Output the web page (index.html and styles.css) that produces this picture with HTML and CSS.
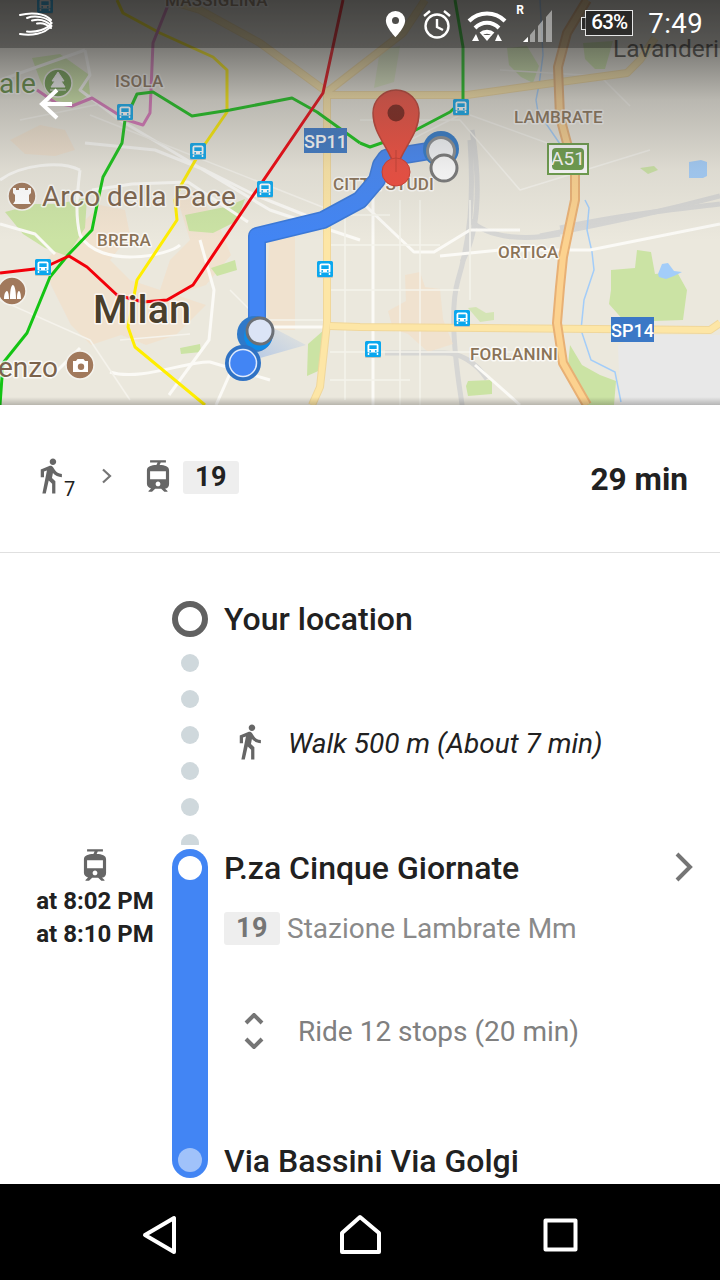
FILE: index.html
```html
<!DOCTYPE html>
<html lang="en">
<head>
<meta charset="utf-8">
<title>Directions</title>
<link rel="stylesheet" href="styles.css">
</head>
<body>
<div class="screen">
  <section class="map">
    <svg class="map-art" viewBox="0 0 720 405" width="720" height="405" xmlns="http://www.w3.org/2000/svg">
      <defs>
        <g id="stop">
          <rect x="-8" y="-7" width="16" height="16" rx="1" fill="#c9c6ba"/>
          <rect x="-8" y="-8" width="16" height="16" rx="1.500" fill="#0aa7ee"/>
          <path d="M-3.500 -5.500h7a2 2 0 0 1 2 2v6a1 1 0 0 1-1 1h-9a1 1 0 0 1-1-1v-6a2 2 0 0 1 2-2z" fill="#fff"/>
          <rect x="-3.700" y="-3.700" width="7.400" height="3.700" fill="#0aa7ee"/>
          <circle cx="-2.800" cy="2" r=".9" fill="#0aa7ee"/>
          <circle cx="2.800" cy="2" r=".9" fill="#0aa7ee"/>
          <path d="M-4.500 4v2M4.500 4v2" stroke="#fff" stroke-width="1.500"/>
        </g>
        <linearGradient id="cone" x1="0" y1="1" x2="1" y2="0">
          <stop offset="0" stop-color="#4285f4" stop-opacity=".35"/>
          <stop offset="1" stop-color="#4285f4" stop-opacity="0"/>
        </linearGradient>
      </defs>
      <rect width="720" height="405" fill="#ebe8dd"/>

      <g class="grey-area">
        <path d="M618 345l26-10h76v70H620z"/>
      </g>
      <g class="rail">
        <path d="M540 236C600 225 660 212 720 196"/>
        <path d="M560 228C620 215 670 210 720 204"/>
        <path d="M470 140C474 200 470 240 458 280S462 400 462 405"/>
        <path d="M472 130C480 180 480 230 462 262"/>
        <path d="M470 220c20 20 60 20 90 14"/>
        <path d="M385 353h60c14 0 30 8 42 26"/>
      </g>
      <g class="district">
        <path d="M100 205l25 5 5 25-20 25 20 20 30 10 10-30 20-20-14-45 20-5 25 40 10 25-25 30-30 10 30 10-30 30-30 10-25-10-30 10-20-20-20-40-5-25z"/>
        <path d="M270 235h25v95h-25l-5-30z"/>
        <path d="M405 275l15-3 5 15 15 2 3 30 10 25-25 8-20-18-15-5-5-18 18-10z"/>
        <path d="M10 140l30-15 25 5 10 20-20 6-30-2z"/>
      </g>
      <g class="park">
        <path d="M32 58l28-4 28 20 2 20-14 10-26-4-10-20z"/>
        <path d="M5 212l30-8 22 0 30-6-2 30-18 28-22-8-22-14z"/>
        <path d="M185 215l40-8 20-8-8 22-24 12-24-2z"/>
        <path d="M211 268l24-8 2 10-20 6z"/>
        <path d="M180 348l20-4 1 8-20 2z"/>
        <path d="M308 344l16-14 1 38-18 8z"/>
        <path d="M611 270l24-2 2-18 14 2 4 22 22-2 10 18-4 30-58 2-16-18 2-14z"/>
        <path d="M468 308l8-1 10 6 8-1 0 8-14 2z" opacity=".7"/>
        <path d="M466 386l2-5 24-1 0 14-24 2z"/>
        <path d="M570 345l12 20 18 10 16 6-2 24h-30l-16-40z"/>
        <path d="M507 48l20-2 12 20-6 17-12-6-12-12z" opacity=".9"/>
        <path d="M583 43l30-2-8 28-10 0-10-10z"/>
        <path d="M380 50l20-4-6 36-20 6z" opacity=".5"/>
        <path d="M640 168l14-2 4 4-10 4z"/>
      </g>
      <g class="water">
        <path d="M689 162l12-2 6 2 0 14-4 2-14 0z"/>
        <path d="M658 274l4-10 6-1 6 8 8 1-8 4-8 3-7-2z"/>
        <path class="river" d="M540 0l3 55-4 30-3 15 2 12 22 32"/>
        <path class="river" d="M585 200l4 8-2 22 5 22 2 18-10 30-3 30 10 30 24 12 6 30"/>
      </g>
      <g class="street">
        <path d="M0 80L85 50M85 50l5 25-10 15 40 30 150 90 90 30M85 143l70 7 50 20 50 25 75 30"/>
        <path d="M0 180c20-15 60-20 80-10M80 170c-3 25-5 45 0 65 20 35 90 20 100 10"/>
        <path d="M0 224l35 10 20 20M92 190l40-6 56-2 60 40"/>
        <path d="M200 240l14 50-5 50-40 55"/>
        <path d="M270 327H330M373 190V405M360 200l12 12 42 40 20 0 36-22h50M440 256l60-6 90 0 130-26"/>
        <path d="M110 372c30 10 80-12 100-10l60 18M80 348l-30 30M236 360l-20 45"/>
        <path d="M475 365l45 40"/>
      </g>
      <g class="street thin">
        <path d="M330 215h60M330 245h110M330 290h130M330 352h200M345 200v200M400 200v205M420 200v205M470 200v100M330 380h80M360 120h100l60 70 130-40M470 115l110 40M0 300l90 40 40 60M120 340l70-6M230 290l30 30 70 0M90 115L330 210M20 120l80-16M500 70l100 6 30 30M410 140l60-30"/>
      </g>

      <g class="ring-casing">
        <path d="M167 0L200 10 260 43 327 92 403 33 425 0M327 92V323L320 387 312 405M327 95H467L553 83 627 73 640 60 655 38"/>
        <path d="M330 326L360 327 710 330 720 323"/>
      </g>
      <g class="ring">
        <path d="M167 0L200 10 260 43 327 92 403 33 425 0M327 92V323L320 387 312 405M327 95H467L553 83 627 73 640 60 655 38"/>
        <path d="M330 326L360 327 710 330 720 323"/>
      </g>
      <g class="motor-casing"><path d="M587 0L567 33 558 67 560 117 567 143 575 173 575 200 563 257 560 287 557 323 563 363 587 405"/></g>
      <g class="motor"><path d="M587 0L567 33 558 67 560 117 567 143 575 173 575 200 563 257 560 287 557 323 563 363 587 405"/></g>

      <g class="line">
        <path class="l-yellow" d="M117 0L123 13 160 33 213 57 227 70 227 112 203 147 180 187 175 200 177 220 137 280 128 327 135 347 205 405"/>
        <path class="l-pink" d="M170 0L153 43 150 113 143 125 127 120 92 98 72 106 56 103 37 90"/>
        <path class="l-green" d="M360 143L370 147 410 133 450 112 463 100 463 47 455 0"/>
        <path class="l-green" d="M360 143L317 112 292 98 230 110 192 116 153 92 137 94 125 120 122 143 103 177 98 200 92 230 68 255 50 277 27 333 3 363 0 405"/>
        <path class="l-red" d="M343 0L323 93 250 200 193 285 167 300 143 302 117 295 87 267 69 256 43 268 0 273"/>
      </g>

      <use href="#stop" x="45" y="5"/>
      <use href="#stop" x="125" y="112"/>
      <use href="#stop" x="198" y="151"/>
      <use href="#stop" x="265" y="189"/>
      <use href="#stop" x="43" y="267"/>
      <use href="#stop" x="325" y="269"/>
      <use href="#stop" x="461" y="107"/>
      <use href="#stop" x="462" y="318"/>
      <use href="#stop" x="373" y="349"/>

      <g class="poi">
        <circle cx="58" cy="83" r="14" fill="#6d9e4c" stroke="#f4f3ee" stroke-width="1.500"/>
        <path d="M58 72l6 9h-3l4 6H51l4-6h-3zM50 90h16" fill="#fff" stroke="#fff" stroke-width="1"/>
        <circle cx="22" cy="196" r="14" fill="#a1795c" stroke="#f4f3ee" stroke-width="1.500"/>
        <path d="M13 204l2-3v-6l-2-2v-5h3v2h3v-2h6v2h3v-2h3v5l-2 2v6l2 3z" fill="#fff"/>
        <circle cx="12" cy="291" r="14" fill="#a1795c" stroke="#f4f3ee" stroke-width="1.500"/>
        <path d="M4 299c0-6 2-8 3-8s2 3 2 8zM10 299c0-12 2-14 3-14s3 3 3 14zM17 299c0-6 1-8 2-8s2 3 2 8z" fill="#fff"/>
        <circle cx="80" cy="365" r="14" fill="#a1795c" stroke="#f4f3ee" stroke-width="1.500"/>
        <path fill-rule="evenodd" d="M73 361h3l1.500-2h6l1.500 2h3v11H73zM81 363.500a3.200 3.200 0 1 0 0 6.400 3.200 3.200 0 0 0 0-6.400z" fill="#fff"/>
      </g>

      <text class="lbl lbl-green" x="-1" y="93">ale</text>
      <text class="lbl lbl-sm" x="115" y="87">ISOLA</text>
      <text class="lbl lbl-lg" x="42" y="206">Arco della Pace</text>
      <text class="lbl lbl-sm" x="97" y="246">BRERA</text>
      <text class="lbl lbl-milan" x="93" y="323">Milan</text>
      <text class="lbl lbl-lg" x="-2" y="377">enzo</text>
      <text class="lbl lbl-sm" x="333" y="190">CITTÀ STUDI</text>
      <text class="lbl lbl-sm" x="514" y="123">LAMBRATE</text>
      <text class="lbl lbl-sm" x="498" y="258">ORTICA</text>
      <text class="lbl lbl-sm" x="470" y="360">FORLANINI</text>
      <text class="lbl lbl-dark" x="613" y="57">Lavanderia</text>
      <text class="lbl lbl-sm" x="165" y="6">MASSIGLINA</text>

      <rect x="304" y="128" width="43" height="25" fill="#3b78c6"/>
      <text class="shield" x="325.500" y="148">SP11</text>
      <rect x="611" y="317" width="43" height="25" fill="#3b78c6"/>
      <text class="shield" x="632.500" y="337">SP14</text>
      <rect x="548" y="144" width="40" height="30" fill="#fff" stroke="#6a9c48" stroke-width="2"/>
      <rect x="552" y="148" width="32" height="22" rx="4" fill="#6a9c48"/>
      <text class="shield shield-a" x="568" y="165">A51</text>

      <path d="M243 363L262 322 306 345z" fill="url(#cone)"/>
      <g class="route">
        <path class="route-edge" d="M257 332V236L323 220 360 200 377 180 381 165 386 158 441 149"/>
        <path class="route-core" d="M257 332V236L323 220 360 200 377 180 381 165 386 158 441 149"/>
      </g>

      <circle cx="441" cy="149" r="18" fill="#2f79c9"/>
      <circle cx="441" cy="151" r="13.500" fill="#f6f8fa" stroke="#8a8d90" stroke-width="3"/>
      <circle cx="444" cy="168" r="13" fill="#fff" stroke="#777" stroke-width="3"/>

      <path d="M396 170C390 148 373 135 373 113a23 23 0 0 1 46 0C419 135 402 148 396 170z" fill="#f24a3a" stroke="#c23c2e" stroke-width="1.500"/>
      <circle cx="396" cy="113" r="8.500" fill="#7d1d13"/>
      <circle cx="396" cy="172" r="14" fill="#ee4a3c" stroke="#d0392c" stroke-width="1"/>
      <path d="M396 150V172" stroke="#c83a2c" stroke-width="1"/>

      <circle cx="255" cy="334" r="18" fill="#2f79c9"/>
      <circle cx="258" cy="336" r="14" fill="#0e8be8"/>
      <circle cx="260" cy="331" r="13" fill="#dbe4f6" stroke="#6c7076" stroke-width="3"/>
      <circle cx="243" cy="363" r="18" fill="#2f72c4"/>
      <circle cx="243" cy="363" r="13.500" fill="#4285f4" stroke="#dfe9fb" stroke-width="1.500"/>
    </svg>
    <div class="map-scrim"></div>
    <div class="map-foot"></div>
    <div class="status">
      <svg class="swift" viewBox="0 0 34 24" width="34" height="24" xmlns="http://www.w3.org/2000/svg">
        <g fill="none" stroke="#fff" stroke-linecap="round">
          <path stroke-width="2" d="M1 3C12 0 26 1 32 8"/>
          <path stroke-width="2" d="M8 6C16 3 28 5 32.500 11"/>
          <path stroke-width="2" d="M13 8.500C21 6.500 28 9 32.500 14"/>
          <path stroke-width="2" d="M18 11.500C23 10.500 28 12 32 16"/>
          <path stroke-width="2" d="M1 22C12 24 26 22 32 14"/>
          <path stroke-width="2" d="M8 19.500C16 20.500 28 18 32.500 11"/>
        </g>
      </svg>
      <div class="status-right">
        <svg class="st-pin" viewBox="0 0 24 32" width="21" height="28" xmlns="http://www.w3.org/2000/svg">
          <path d="M12 1a11 11 0 0 0-11 11c0 8 11 19 11 19s11-11 11-19A11 11 0 0 0 12 1zm0 15a4 4 0 1 1 0-8 4 4 0 0 1 0 8z" fill="#fff"/>
        </svg>
        <svg class="st-alarm" viewBox="0 0 30 30" width="30" height="30" xmlns="http://www.w3.org/2000/svg">
          <g fill="none" stroke="#fff" stroke-width="2.400">
            <circle cx="15" cy="17" r="11.500"/>
            <path d="M15 10v8l6 3M2 7l6-5M28 7l-6-5"/>
          </g>
        </svg>
        <svg class="st-wifi" viewBox="0 0 40 34" width="40" height="34" xmlns="http://www.w3.org/2000/svg">
          <g fill="none" stroke="#fff" stroke-width="4">
            <path d="M2 12C12 2 28 2 38 12"/>
            <path d="M8 19C15 12 25 12 32 19"/>
            <path d="M14 25C17 22 23 22 26 25"/>
          </g>
          <path d="M20 33l-5-6h10zM5 33l4-7 3 7zM35 33l-4-7-3 7z" fill="#fff" transform="translate(0 -1)"/>
        </svg>
        <div class="st-signal">
          <span class="st-r">R</span>
          <svg viewBox="0 0 32 34" width="32" height="34" xmlns="http://www.w3.org/2000/svg">
            <path d="M1 33l5-5v5zM8 33V26l5-6V33zM16 33V17l5-6V33zM24 33V8l6-7V33z" fill="#fff" fill-opacity=".45"/>
            <path d="M1 33l5-5v5z" fill="#fff"/>
          </svg>
        </div>
        <div class="st-batt"><span>63%</span></div>
        <span class="st-time">7:49</span>
      </div>
    </div>
    <svg class="back" viewBox="0 0 34 32" width="34" height="32" xmlns="http://www.w3.org/2000/svg">
      <path d="M33 16H3M18 2L3 16l15 14" fill="none" stroke="#fff" stroke-width="4"/>
    </svg>
  </section>

  <section class="summary">
    <div class="trip">
      <svg class="ic-walk ic-walk-top" viewBox="0 0 24 24" xmlns="http://www.w3.org/2000/svg"><path d="M13.500 5.500c1.100 0 2-.9 2-2s-.9-2-2-2-2 .9-2 2 .9 2 2 2zM9.800 8.900L7 23h2.100l1.800-8 2.100 2v6h2v-7.500l-2.100-2 .6-3C14.800 12 16.800 13 19 13v-2c-1.900 0-3.500-1-4.300-2.400l-1-1.600c-.4-.6-1-1-1.700-1-.3 0-.5.1-.8.1L6 8.300V13h2V9.600l1.800-.7"/></svg>
      <span class="walk-num">7</span>
      <svg class="ic-sep" viewBox="0 0 12 16" xmlns="http://www.w3.org/2000/svg"><path d="M2 1.500L9 8l-7 6.500" fill="none" stroke="#757575" stroke-width="2.200"/></svg>
      <svg class="ic-tram" viewBox="0 0 24 24" xmlns="http://www.w3.org/2000/svg"><path d="M19 16.940V8.500c0-2.790-2.610-3.400-6.010-3.490l.76-1.510H17V2H7v1.500h4.750l-.76 1.520C7.860 5.110 5 5.730 5 8.500v8.440c0 1.450 1.190 2.660 2.590 2.970L6 21.500v.5h2.230l2-2H14l2 2h2v-.5L16.500 20h-.08c1.690 0 2.580-1.370 2.580-3.060zm-7 1.560c-.83 0-1.500-.67-1.500-1.500s.67-1.500 1.500-1.500 1.500.67 1.500 1.500-.67 1.500-1.500 1.500zm5-4.500H7V9h10v5z"/></svg>
      <span class="badge">19</span>
    </div>
    <span class="duration">29 min</span>
  </section>

  <section class="timeline">
    <div class="times">
      <svg class="ic-tram-small" viewBox="0 0 24 24" xmlns="http://www.w3.org/2000/svg"><path d="M19 16.940V8.500c0-2.790-2.610-3.400-6.010-3.490l.76-1.510H17V2H7v1.500h4.750l-.76 1.520C7.860 5.110 5 5.730 5 8.500v8.440c0 1.450 1.190 2.660 2.590 2.970L6 21.500v.5h2.230l2-2H14l2 2h2v-.5L16.500 20h-.08c1.690 0 2.580-1.370 2.580-3.060zm-7 1.560c-.83 0-1.500-.67-1.500-1.500s.67-1.500 1.500-1.500 1.500.67 1.500 1.500-.67 1.500-1.500 1.500zm5-4.500H7V9h10v5z"/></svg>
      <span class="time">at 8:02 PM</span>
      <span class="time">at 8:10 PM</span>
    </div>
    <div class="rail-col">
      <span class="origin"></span>
      <div class="dots">
        <i></i><i></i><i></i><i></i><i></i><i></i>
      </div>
      <div class="bar">
        <span class="bar-start"></span>
        <span class="bar-end"></span>
      </div>
    </div>
    <div class="details">
      <div class="stop stop-origin">Your location</div>
      <div class="walk-row">
        <svg class="ic-walk" viewBox="0 0 24 24" xmlns="http://www.w3.org/2000/svg"><path d="M13.500 5.500c1.100 0 2-.9 2-2s-.9-2-2-2-2 .9-2 2 .9 2 2 2zM9.800 8.900L7 23h2.100l1.800-8 2.100 2v6h2v-7.500l-2.100-2 .6-3C14.800 12 16.800 13 19 13v-2c-1.900 0-3.500-1-4.300-2.400l-1-1.600c-.4-.6-1-1-1.700-1-.3 0-.5.1-.8.1L6 8.300V13h2V9.600l1.800-.7"/></svg>
        <em>Walk 500 m (About 7 min)</em>
      </div>
      <div class="stop stop-board">
        <span>P.za Cinque Giornate</span>
        <svg class="ic-more" viewBox="0 0 20 30" xmlns="http://www.w3.org/2000/svg"><path d="M3 2l13 13L3 28" fill="none" stroke="#757575" stroke-width="4"/></svg>
      </div>
      <div class="line-row">
        <span class="badge badge-muted">19</span>
        <span class="headsign">Stazione Lambrate Mm</span>
      </div>
      <div class="ride-row">
        <svg class="ic-expand" viewBox="0 0 20 36" xmlns="http://www.w3.org/2000/svg"><path d="M2 10l8-8 8 8M2 26l8 8 8-8" fill="none" stroke="#757575" stroke-width="4"/></svg>
        <span>Ride 12 stops (20 min)</span>
      </div>
      <div class="stop stop-alight">Via Bassini Via Golgi</div>
    </div>
  </section>

  <nav class="navbar">
    <svg viewBox="0 0 480 96" width="480" height="96" xmlns="http://www.w3.org/2000/svg">
      <g fill="none" stroke="#fff" stroke-width="4" stroke-linejoin="round">
        <path d="M25 51L54 34V68z"/>
        <path d="M240 33L259 49V68H222V49z"/>
        <path d="M425.500 36.500h30v29h-30z"/>
      </g>
    </svg>
  </nav>
</div>
</body>
</html>
```

FILE: styles.css
```css
* { box-sizing: border-box; }
html, body { margin: 0; padding: 0; background: #fff; }
.screen {
  width: 720px;
  height: 1280px;
  display: flex;
  flex-direction: column;
  overflow: hidden;
  font-family: Roboto, "Liberation Sans", sans-serif;
  color: #212121;
}

/* map */
.map { position: relative; height: 405px; flex: none; overflow: hidden; }
.map-art { display: block; }
.map-scrim {
  position: absolute; left: 0; right: 0; top: 0; height: 240px;
  background: linear-gradient(to bottom, rgba(40,40,40,.72) 0, rgba(60,60,60,.64) 48px, rgba(90,90,90,.34) 100px, rgba(120,120,120,.12) 170px, rgba(150,150,150,0) 240px);
}
.map-foot {
  position: absolute; left: 0; right: 0; bottom: 0; height: 8px;
  background: linear-gradient(to bottom, rgba(0,0,0,0), rgba(0,0,0,.22));
}
.grey-area path { fill: #e8e8e8; }
.rail path { fill: none; stroke: #d6d6d4; stroke-width: 5; }
.district path { fill: #f2dfc8; opacity: .65; }
.park path { fill: #cbe3a4; }
.water path { fill: #a3cdf9; }
.water .river { fill: none; stroke: #a3cdf9; stroke-width: 1.5; }
.street path { fill: none; stroke: #fbfaf6; stroke-width: 3; stroke-linejoin: round; }
.street.thin path { stroke: #f5f3ec; stroke-width: 1.5; }
.ring-casing path { fill: none; stroke: #f0d79b; stroke-width: 8; stroke-linejoin: round; }
.ring path { fill: none; stroke: #fde6a6; stroke-width: 6; stroke-linejoin: round; }
.motor-casing path { fill: none; stroke: #e8b074; stroke-width: 10; stroke-linejoin: round; }
.motor path { fill: none; stroke: #fcd28f; stroke-width: 6; stroke-linejoin: round; }
.line path { fill: none; stroke-width: 3; stroke-linejoin: round; }
.l-yellow { stroke: #ffee00; }
.l-pink { stroke: #d873b8; }
.l-green { stroke: #14c414; }
.l-red { stroke: #f2000a; }

.lbl {
  font-family: Roboto, "Liberation Sans", sans-serif;
  paint-order: stroke;
  stroke: rgba(255,255,255,.75);
  stroke-width: 3px;
  stroke-linejoin: round;
}
.lbl-sm { font-size: 17px; font-weight: 500; fill: #8a7358; letter-spacing: .2px; }
.lbl-lg { font-size: 28px; fill: #7b634c; }
.lbl-green { font-size: 28px; fill: #5f8c3c; }
.lbl-milan { font-size: 39.5px; font-weight: 500; fill: #4a3f2c; }
.lbl-dark { font-size: 24.5px; fill: #3e3c35; stroke: none; }
.shield {
  font-family: Roboto, "Liberation Sans", sans-serif;
  font-size: 18px; font-weight: 500; fill: #fff; text-anchor: middle;
}
.shield-a { font-weight: 400; font-size: 19px; }
.route-edge { fill: none; stroke: #3a78d8; stroke-width: 18; stroke-linejoin: round; }
.route-core { fill: none; stroke: #4285f4; stroke-width: 15; stroke-linejoin: round; }

/* status bar */
.status {
  position: absolute; left: 0; right: 0; top: 0; height: 48px;
  display: flex; align-items: center; justify-content: space-between;
  padding: 0 17px 0 19px;
  background: rgba(0,0,0,.28);
  color: #fff;
}
.swift { display: block; }
.status-right { display: flex; align-items: center; }
.st-pin { display: block; margin-right: 16px; }
.st-alarm { display: block; margin-right: 15px; }
.st-wifi { display: block; margin-right: 15px; margin-top: 3px; }
.st-signal { position: relative; width: 32px; margin-right: 31px; margin-top: 4px; }
.st-signal svg { display: block; }
.st-r { position: absolute; left: -6px; top: -6px; font-size: 12px; font-weight: 700; line-height: 14px; }
.st-batt {
  position: relative;
  width: 48px; height: 26px; margin-right: 15px; margin-top: -3px;
  border: 1.5px solid #e6e6e6;
  background: rgba(0,0,0,.45);
  font-size: 20.5px; font-weight: 500; line-height: 23px; text-align: center;
  letter-spacing: -.8px;
}
.st-batt::before {
  content: "";
  position: absolute; left: -5px; top: 6px; width: 4px; height: 11px;
  background: rgba(0,0,0,.45);
  border: 1.5px solid #e6e6e6; border-right: 0;
}
.st-time { font-size: 27.5px; font-weight: 400; line-height: 48px; letter-spacing: .4px; }
.back { position: absolute; left: 39px; top: 88px; }

/* summary */
.summary {
  flex: none; height: 148px;
  display: flex; align-items: center; justify-content: space-between;
  padding: 0 32px 0 31px;
  border-bottom: 1px solid #e0e0e0;
}
.trip { display: flex; align-items: center; }
.ic-walk { width: 39px; height: 39px; fill: #666; display: block; flex: none; }
.ic-walk-top { margin-top: -6px; }
.walk-num { font-size: 20px; line-height: 20px; margin: 21px 0 0 -6px; width: 11px; }
.ic-sep { width: 12px; height: 16px; margin: -6px 0 0 26px; display: block; }
.ic-tram { width: 38px; height: 38px; fill: #666; margin: -6px 0 0 26px; display: block; }
.badge {
  display: block;
  background: #eeeeee; border-radius: 3px;
  width: 56px; height: 33px;
  font-size: 27px; font-weight: 700; line-height: 33px; text-align: center;
  color: #212121;
  letter-spacing: .4px;
}
.trip .badge { margin: -2px 0 0 6px; }
.duration { font-size: 31.6px; font-weight: 700; margin-top: 2px; }

/* timeline */
.timeline { flex: 1; min-height: 0; overflow: hidden; display: flex; align-items: flex-start; }
.times {
  width: 172px; flex: none;
  padding: 293px 18px 0 36px;
  display: flex; flex-direction: column; align-items: center;
}
.ic-tram-small { width: 38px; height: 38px; fill: #666; display: block; margin-bottom: 1px; }
.time { font-size: 24px; font-weight: 700; line-height: 33px; white-space: nowrap; }
.rail-col { width: 36px; flex: none; padding-top: 48px; display: flex; flex-direction: column; align-items: center; }
.origin { display: block; width: 36px; height: 36px; border: 6px solid #616161; border-radius: 50%; flex: none; }
.dots {
  height: 191px; margin-top: 17px; overflow: hidden; flex: none;
  display: flex; flex-direction: column; gap: 18px;
}
.dots i { display: block; width: 18px; height: 18px; flex: none; border-radius: 50%; background: #cfd8dc; }
.bar {
  width: 36px; height: 329px; margin-top: 4px; flex: none;
  border-radius: 18px; background: #4285f4;
  display: flex; flex-direction: column; justify-content: space-between; align-items: center;
  padding: 7px 0 6px;
}
.bar-start, .bar-end { display: block; width: 24px; height: 24px; border-radius: 50%; }
.bar-start { background: #fff; }
.bar-end { background: #a0c2fa; }

.details { flex: 1; padding: 0 0 0 16px; min-width: 0; }
.stop { font-size: 32px; font-weight: 500; line-height: 40px; white-space: nowrap; }
.stop-origin { margin-top: 46px; }
.walk-row { display: flex; align-items: center; height: 40px; margin-top: 84px; font-size: 28px; padding-left: 6px; color: #212121; }
.walk-row .ic-walk { margin-right: 19px; margin-top: -3px; }
.stop-board {
  margin-top: 85px;
  display: flex; justify-content: space-between; align-items: center;
  padding-right: 26px;
}
.ic-more { width: 20px; height: 30px; display: block; margin-top: -2px; }
.line-row { display: flex; align-items: center; margin-top: 24px; gap: 7px; }
.badge-muted { color: #757575; }
.headsign { font-size: 28px; color: #8a8a8a; }
.ride-row { display: flex; align-items: center; height: 40px; margin-top: 66px; padding-left: 20px; font-size: 28px; color: #808080; }
.ic-expand { width: 20px; height: 36px; display: block; margin-right: 34px; }
.stop-alight { margin-top: 90px; }

/* nav */
.navbar { flex: none; height: 96px; background: #000; display: flex; justify-content: center; }
.navbar svg { display: block; }
```
